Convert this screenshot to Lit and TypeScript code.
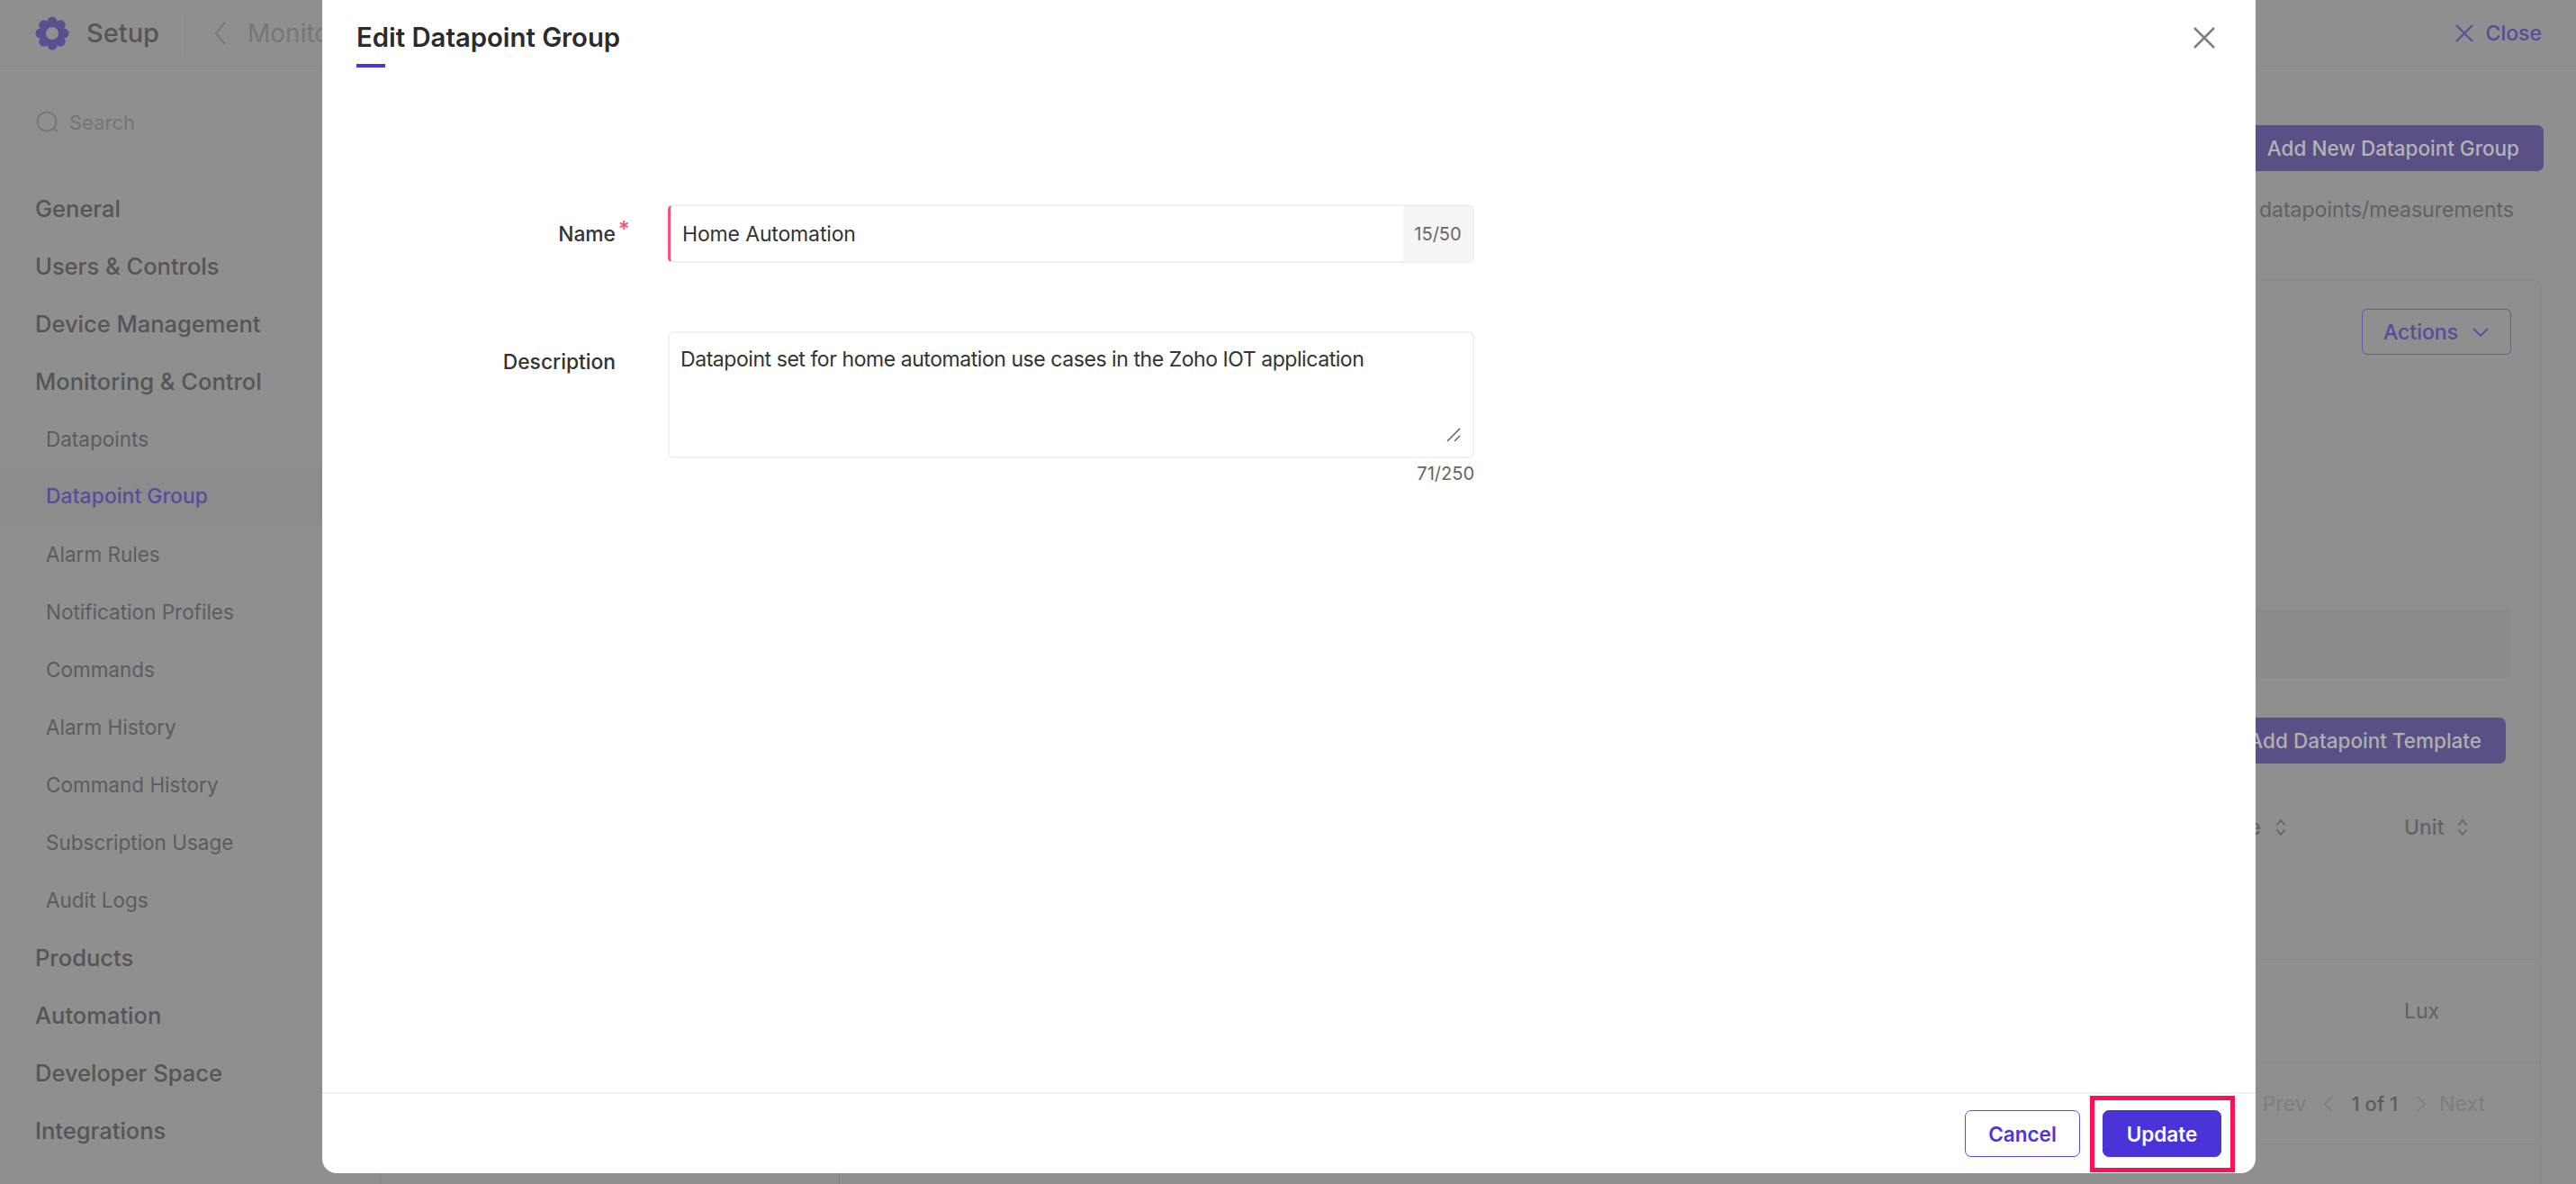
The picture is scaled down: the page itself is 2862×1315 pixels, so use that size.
import { LitElement, html, css } from "lit";
import { customElement } from "lit/decorators.js";

const sections = ["General", "Users & Controls", "Device Management", "Monitoring & Control"];
const subs = ["Datapoints", "Datapoint Group", "Alarm Rules", "Notification Profiles", "Commands", "Alarm History", "Command History", "Subscription Usage", "Audit Logs"];
const after = ["Products", "Automation", "Developer Space", "Integrations"];

const sortIcon = html`<svg class="sort" viewBox="0 0 12 20" width="12" height="20" fill="none" stroke="currentColor" stroke-width="1.6"><path d="M1.5 7.5L6 2l4.500 5.500M1.500 12.500L6 18l4.500-5.500"/></svg>`;

@customElement("app-root")
export class AppRoot extends LitElement {
  static styles = css`
    :host { display: block; width: 2862px; height: 1315px; position: relative; overflow: hidden; background: #8f8f8f;
      font-family: Inter, "Liberation Sans", sans-serif; color: #555; }
    .page { width: 100%; height: 100%; display: flex; flex-direction: column; }
    .top { height: 73px; flex: none; border-bottom: 1px solid #8a8a8a; display: flex; align-items: center; box-sizing: content-box; }
    .brand { width: 206px; height: 52px; flex: none; display: flex; align-items: center; gap: 19px; padding-left: 39px; box-sizing: border-box; border-right: 1px solid #8b8b8b; font-size: 29px; font-weight: 500; color: #555; }
    .crumb { display: flex; align-items: center; gap: 22px; padding-left: 31px; font-size: 28px; color: #777; flex: 1; }
    .close { display: flex; align-items: center; gap: 14px; padding-right: 38px; color: #584c9a; font-size: 23px; font-weight: 500; }
    .body { flex: 1; display: flex; min-height: 0; }
    .side { width: 420px; flex: none; box-sizing: border-box; padding-top: 1px; }
    .search { height: 124px; display: flex; align-items: center; gap: 10px; padding: 0 0 2px 39px; color: #767676; font-size: 22px; box-sizing: border-box; }
    .item { height: 64px; display: flex; align-items: center; padding-left: 39px; font-size: 25.5px; font-weight: 500; color: #555; }
    .sub { padding-left: 51px; font-size: 22.5px; font-weight: 400; color: #5c5c5c; }
    .sub.active { background: #8c8c8d; color: #574c9a; font-weight: 500; font-size: 23px; }
    .main { flex: 1; display: flex; flex-direction: column; align-items: flex-end; padding: 65px 36px 0 0; min-width: 0; }
    .add { height: 51px; width: 600px; background: #5a5085; color: #b4b4b4; border-radius: 7px; display: flex; align-items: center; justify-content: flex-end; padding-right: 27px; box-sizing: border-box; font-size: 22.5px; font-weight: 500; flex: none; }
    .desc { margin-top: 26px; margin-right: 33px; height: 34px; font-size: 23px; line-height: 34px; color: #616161; flex: none; }
    .card { align-self: stretch; margin: 60px 3px 0 2px; height: 1100px; flex: none; position: relative; box-sizing: border-box; border: 1px solid #878787; border-radius: 10px; padding: 32px 32px 0 0; display: flex; flex-direction: column; align-items: flex-end; }
    .card::before { content: ""; position: absolute; left: 509px; top: 0; bottom: 0; width: 1px; background: #858585; }
    .actions { width: 166px; height: 51px; box-sizing: border-box; border: 1px solid #6458a8; border-radius: 6px; color: #584c9a; font-size: 23px; font-weight: 500; display: flex; align-items: center; justify-content: center; gap: 15px; flex: none; }
    .band { align-self: stretch; height: 76px; margin-top: 283px; background: #8b8b8c; flex: none; }
    .tpl { margin-top: 44px; margin-right: 6px; width: 600px; height: 51px; background: #5a5085; color: #b0b0b0; border-radius: 7px; display: flex; align-items: center; justify-content: flex-end; padding-right: 27px; box-sizing: border-box; font-size: 22.5px; font-weight: 500; flex: none; }
    .thead { align-self: stretch; margin-top: 46px; margin-right: -32px; height: 172px; box-sizing: border-box; flex: none; border-bottom: 1px solid #8a8a8a; display: grid; grid-template-columns: 1fr 151px; }
    .th { display: flex; align-items: flex-start; font-size: 23px; font-weight: 500; color: #646464; gap: 15px; padding-top: 10px; line-height: 30px; }
    .th .sort { margin-top: 5px; }
    .th.left { justify-content: flex-end; padding-right: 131px; gap: 16px; }
    .tr { align-self: stretch; margin-right: -32px; height: 115px; flex: none; border-bottom: 1px solid #8a8a8a; display: flex; align-items: center; justify-content: flex-end; box-sizing: border-box; }
    .tr span { width: 151px; font-size: 23px; color: #616161; }
    .pager { align-self: stretch; margin-right: -32px; height: 90px; flex: none; border-bottom: 1px solid #8a8a8a; display: flex; align-items: center; justify-content: flex-end; padding-right: 61px; gap: 18px; box-sizing: border-box; font-size: 23px; color: #7e7e7e; }
    .pager b { font-weight: 500; font-size: 22px; color: #5c5c5c; margin: 0 2px; }
    .pager .next { margin-left: -4px; }
    .modal { position: absolute; left: 358px; top: 0; width: 2148px; height: 1303px; background: #fff; border-radius: 0 0 16px 16px; display: flex; flex-direction: column; color: #333; }
    .mhead { height: 76px; flex: none; position: relative; padding: 23px 0 0 38px; box-sizing: border-box; }
    .mhead h2 { margin: 0; font-size: 29.3px; line-height: 38px; font-weight: 600; color: #2b2b2b; }
    .bar { position: absolute; left: 38px; top: 71px; width: 32px; height: 4px; background: #4d35dd; }
    .x { position: absolute; right: 43px; top: 28px; }
    .form { flex: 1; display: grid; grid-template-columns: 326px 896px; column-gap: 58px; align-content: start; padding-top: 151px; }
    .label { font-size: 22.8px; color: #333; font-weight: 500; text-align: right; line-height: 65px; }
    .label.d { line-height: 67px; }
    .nm { position: relative; }
    .star { position: absolute; left: 100%; margin-left: 3px; top: -24px; color: #ff4d79; font-size: 24px; }
    .name { height: 65px; box-sizing: border-box; border: 2px solid #f1f1f1; border-left: 3px solid #f5517a; border-radius: 6px; display: flex; align-items: stretch; overflow: hidden; }
    .name .v { flex: 1; display: flex; align-items: center; padding-left: 13px; font-size: 23px; letter-spacing: -0.15px; color: #333; }
    .name .c { width: 77px; background: #f5f5f5; display: flex; align-items: center; justify-content: center; font-size: 20px; color: #666; }
    .gap { grid-column: 1 / 3; height: 76px; }
    .ta { height: 141px; box-sizing: border-box; border: 2px solid #f1f1f1; border-radius: 6px; padding: 13px 12px; font-size: 23px; letter-spacing: -0.44px; line-height: 32px; color: #333; position: relative; }
    .grip { position: absolute; right: 13px; bottom: 16px; }
    .count { grid-column: 2; text-align: right; font-size: 20px; color: #666; line-height: 28px; margin-top: 3px; }
    .mfoot { height: 90px; flex: none; border-top: 2px solid #f1f1f1; display: flex; align-items: center; justify-content: flex-end; padding: 0 38px 0 0; gap: 25px; box-sizing: border-box; position: relative; }
    .btn { height: 52px; width: 128px; box-sizing: border-box; border-radius: 7px; display: flex; align-items: center; justify-content: center; font-size: 22.5px; font-weight: 600; border: 1.5px solid #5e49e0; color: #4d35dd; background: #fff; }
    .btn.p { width: 132px; background: #4a34d8; border-color: #4a34d8; color: #fff; }
    .hl { position: absolute; right: 23px; top: 2px; width: 161px; height: 85px; box-sizing: border-box; border: 5px solid #ff0f55; }
  `;

  render() {
    return html`
      <div class="page">
        <div class="top">
          <div class="brand">
            <svg width="38" height="38" viewBox="0 0 38 38">
              <g fill="#5a4f8f">
                <circle cx="19" cy="19" r="14"/>
                <circle cx="19" cy="6" r="5.500"/><circle cx="28.200" cy="9.800" r="5.500"/><circle cx="32" cy="19" r="5.500"/><circle cx="28.200" cy="28.200" r="5.500"/>
                <circle cx="19" cy="32" r="5.500"/><circle cx="9.800" cy="28.200" r="5.500"/><circle cx="6" cy="19" r="5.500"/><circle cx="9.800" cy="9.800" r="5.500"/>
              </g>
              <circle cx="19" cy="19" r="7" fill="#8f8f8f"/>
            </svg>
            <span>Setup</span>
          </div>
          <div class="crumb">
            <svg width="16" height="28" viewBox="0 0 16 28" fill="none" stroke="#777" stroke-width="1.8"><path d="M13 2L3 14l10 12"/></svg>
            <span>Monito</span>
          </div>
          <div class="close">
            <svg width="20" height="20" viewBox="0 0 20 20" stroke="#584c9a" stroke-width="2"><path d="M1 1l18 18M19 1L1 19"/></svg>
            <span>Close</span>
          </div>
        </div>
        <div class="body">
          <div class="side">
            <div class="search">
              <svg width="28" height="28" viewBox="0 0 28 28" fill="none" stroke="#767676" stroke-width="1.8"><circle cx="13" cy="13" r="10.500"/><path d="M21 21l3.500 3.500"/></svg>
              <span>Search</span>
            </div>
            ${sections.map((s) => html`<div class="item">${s}</div>`)}
            ${subs.map((s) => html`<div class="item sub ${s === "Datapoint Group" ? "active" : ""}">${s}</div>`)}
            ${after.map((s) => html`<div class="item">${s}</div>`)}
          </div>
          <div class="main">
            <div class="add">Add New Datapoint Group</div>
            <div class="desc">datapoints/measurements</div>
            <div class="card">
              <div class="actions">
                <span>Actions</span>
                <svg width="20" height="12" viewBox="0 0 20 12" fill="none" stroke="#584c9a" stroke-width="1.800"><path d="M2 2l8 8 8-8"/></svg>
              </div>
              <div class="band"></div>
              <div class="tpl">Add Datapoint Template</div>
              <div class="thead">
                <div class="th left"><span>Type</span>${sortIcon}</div>
                <div class="th"><span>Unit</span>${sortIcon}</div>
              </div>
              <div class="tr"><span>Lux</span></div>
              <div class="pager">
                <span>Prev</span>
                <svg width="12" height="20" viewBox="0 0 12 20" fill="none" stroke="#7e7e7e" stroke-width="1.600"><path d="M10 2L2 10l8 8"/></svg>
                <b>1 of 1</b>
                <svg width="12" height="20" viewBox="0 0 12 20" fill="none" stroke="#7e7e7e" stroke-width="1.600"><path d="M2 2l8 8-8 8"/></svg>
                <span class="next">Next</span>
              </div>
            </div>
          </div>
        </div>
      </div>
      <div class="modal">
        <div class="mhead">
          <h2>Edit Datapoint Group</h2>
          <div class="bar"></div>
          <svg class="x" width="28" height="28" viewBox="0 0 28 28" stroke="#808080" stroke-width="2.600"><path d="M3 3l22 22M25 3L3 25"/></svg>
        </div>
        <div class="form">
          <div class="label"><span class="nm">Name<span class="star">*</span></span></div>
          <div class="name"><div class="v">Home Automation</div><div class="c">15/50</div></div>
          <div class="gap"></div>
          <div class="label d">Description</div>
          <div class="ta">Datapoint set for home automation use cases in the Zoho IOT application
            <svg class="grip" width="16" height="16" viewBox="0 0 16 16" stroke="#555" stroke-width="1.400"><path d="M1 15L15 1M9 15l6-6"/></svg>
          </div>
          <div class="count">71/250</div>
        </div>
        <div class="mfoot">
          <div class="btn">Cancel</div>
          <div class="btn p">Update</div>
          <div class="hl"></div>
        </div>
      </div>
    `;
  }
}
